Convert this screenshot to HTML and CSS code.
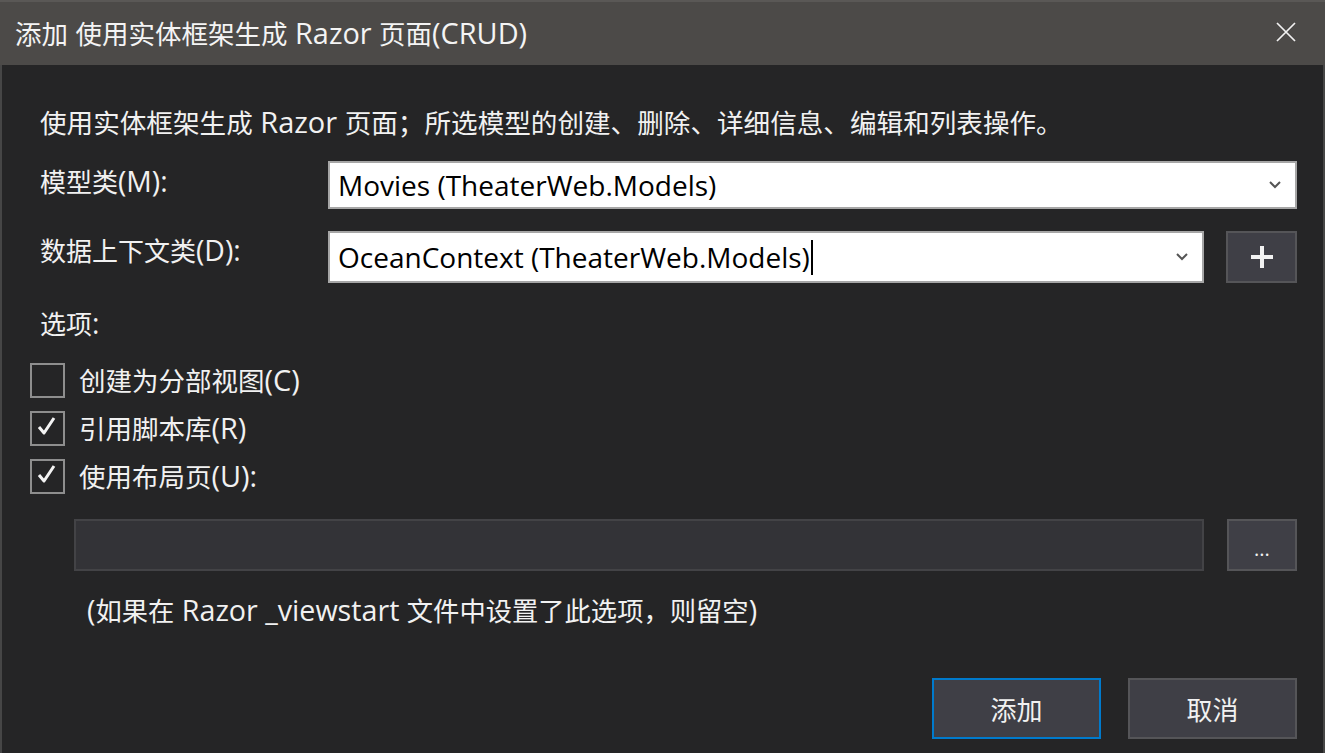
FILE: index.html
```html
<!DOCTYPE html>
<html lang="zh-CN">
<head>
<meta charset="utf-8">
<title>添加 使用实体框架生成 Razor 页面(CRUD)</title>
<link rel="stylesheet" href="styles.css">
</head>
<body>
<div class="window">
  <header class="titlebar">
    <span class="title">添加<span class="lat"> </span>使用实体框架生成<span class="lat"> Razor </span>页面<span class="lat">(CRUD)</span></span>
    <button class="close" aria-label="关闭">
      <svg width="20" height="20" viewBox="0 0 20 20"><path d="M1 1 L19 19 M19 1 L1 19" fill="none" stroke="#f2f2f2" stroke-width="1.7"/></svg>
    </button>
  </header>
  <main class="content">
    <p class="desc">使用实体框架生成<span class="lat"> Razor </span>页面；所选模型的创建、删除、详细信息、编辑和列表操作。</p>

    <div class="row row-model">
      <label class="label label-model">模型类<span class="lat">(M):</span></label>
      <div class="combo">
        <span class="combo-text">Movies (TheaterWeb.Models)</span>
        <svg class="chevron" width="12" height="8" viewBox="0 0 12 8"><path d="M1 1 L6 6 L11 1" fill="none" stroke="#555" stroke-width="2"/></svg>
      </div>
    </div>

    <div class="row row-context">
      <label class="label label-context">数据上下文类<span class="lat">(D):</span></label>
      <div class="combo combo-context">
        <span class="combo-text">OceanContext (TheaterWeb.Models)<span class="caret"></span></span>
        <svg class="chevron" width="12" height="8" viewBox="0 0 12 8"><path d="M1 1 L6 6 L11 1" fill="none" stroke="#555" stroke-width="2"/></svg>
      </div>
      <button class="btn-square plus" aria-label="添加">
        <svg width="22" height="22" viewBox="0 0 22 22"><path d="M11 0 V22 M0 11 H22" fill="none" stroke="#f2f2f2" stroke-width="4"/></svg>
      </button>
    </div>

    <div class="section">选项<span class="lat">:</span></div>

    <div class="checks">
      <div class="check"><span class="box"></span><span class="check-label">创建为分部视图<span class="lat">(C)</span></span></div>
      <div class="check"><span class="box"><svg width="31" height="31" viewBox="0 0 31 31"><path d="M7 14 L12 20 L22 5" fill="none" stroke="#f4f4f4" stroke-width="3" stroke-linejoin="round"/></svg></span><span class="check-label">引用脚本库<span class="lat">(R)</span></span></div>
      <div class="check"><span class="box"><svg width="31" height="31" viewBox="0 0 31 31"><path d="M7 14 L12 20 L22 5" fill="none" stroke="#f4f4f4" stroke-width="3" stroke-linejoin="round"/></svg></span><span class="check-label">使用布局页<span class="lat">(U):</span></span></div>
    </div>

    <div class="layout-row">
      <div class="path"></div>
      <button class="btn-square browse">...</button>
    </div>

    <p class="hint"><span class="lat">(</span>如果在<span class="lat"> Razor _viewstart </span>文件中设置了此选项，则留空<span class="lat">)</span></p>

    <footer class="actions">
      <button class="btn primary">添加</button>
      <button class="btn">取消</button>
    </footer>
  </main>
</div>
</body>
</html>
```

FILE: styles.css
```css
html, body {
  margin: 0;
  padding: 0;
  background: #252526;
}

body {
  font-family: "Open Sans", "Noto Sans CJK SC", sans-serif;
  color: #f1f1f1;
}

.lat {
  font-size: 1.09em;
}

.window {
  width: 1325px;
  height: 753px;
  display: flex;
  flex-direction: column;
  background: #252526;
  overflow: hidden;
}

.titlebar {
  box-sizing: border-box;
  height: 65px;
  flex: none;
  display: flex;
  align-items: center;
  justify-content: space-between;
  padding: 0 29px 0 15px;
  background: #4c4a48;
  border-top: 2px solid #5a5856;
}

.title {
  font-size: 26.5px;
  line-height: 34px;
  color: #f4f4f4;
  white-space: nowrap;
}

.close {
  background: none;
  border: 0;
  padding: 0;
  width: 20px;
  height: 20px;
  margin-bottom: 3px;
  display: flex;
}

.content {
  flex: 1;
  box-sizing: border-box;
  display: flex;
  flex-direction: column;
  padding: 0 26px 0 38px;
  border-left: 2px solid #464646;
  border-right: 2px solid #464646;
}

.desc {
  margin: 40px 0 0;
  height: 34px;
  line-height: 34px;
  font-size: 26.6px;
  white-space: nowrap;
}

.row {
  display: flex;
  align-items: flex-start;
  margin-top: 22px;
}

.label {
  width: 288px;
  flex: none;
  font-size: 26px;
  white-space: nowrap;
}

.label-model { line-height: 40px; }
.label-context { line-height: 38px; }

.combo {
  flex: 1;
  box-sizing: border-box;
  height: 48px;
  display: flex;
  align-items: center;
  padding: 0 14px 0 8px;
  background: #ffffff;
  border: 2px solid #a6a6a6;
  color: #000;
  font-size: 28px;
}

.combo-context {
  height: 52px;
  margin-right: 22px;
}

.combo-text {
  flex: 1;
  white-space: nowrap;
  line-height: 36px;
  display: flex;
  align-items: center;
}

.caret {
  display: inline-block;
  width: 2px;
  height: 35px;
  background: #000;
  margin-left: 1px;
}

.chevron { flex: none; }

.btn-square {
  box-sizing: border-box;
  height: 52px;
  display: flex;
  align-items: center;
  justify-content: center;
  padding: 0;
  background: #3f3f46;
  border: 2px solid #555558;
  color: #f1f1f1;
  font-family: inherit;
}

.plus { width: 71px; flex: none; }

.section {
  margin-top: 23px;
  line-height: 34px;
  height: 34px;
  font-size: 26px;
}

.checks {
  margin-top: 23px;
  margin-left: -10px;
  display: flex;
  flex-direction: column;
  gap: 13px;
}

.check {
  display: flex;
  align-items: center;
  height: 35px;
  gap: 14px;
}

.box {
  box-sizing: border-box;
  width: 35px;
  height: 35px;
  flex: none;
  border: 2px solid #8e8e8e;
  display: flex;
}

.check-label {
  font-size: 26.5px;
  line-height: 34px;
  white-space: nowrap;
}

.layout-row {
  display: flex;
  margin-top: 25px;
  padding-left: 34px;
}

.path {
  flex: 1;
  box-sizing: border-box;
  height: 52px;
  background: #333337;
  border: 2px solid #434346;
  margin-right: 23px;
}

.browse {
  width: 70px;
  flex: none;
  font-size: 20px;
  padding-top: 6px;
}

.hint {
  margin: 22px 0 0;
  padding-left: 47px;
  line-height: 34px;
  height: 34px;
  font-size: 26.3px;
  white-space: nowrap;
}

.actions {
  display: flex;
  justify-content: flex-end;
  gap: 27px;
  margin-top: 51px;
}

.btn {
  box-sizing: border-box;
  width: 169px;
  height: 61px;
  background: #3f3f46;
  border: 2px solid #555558;
  color: #f1f1f1;
  font-family: inherit;
  font-size: 26px;
  padding: 0;
}

.btn.primary {
  border-color: #007acc;
}
```
